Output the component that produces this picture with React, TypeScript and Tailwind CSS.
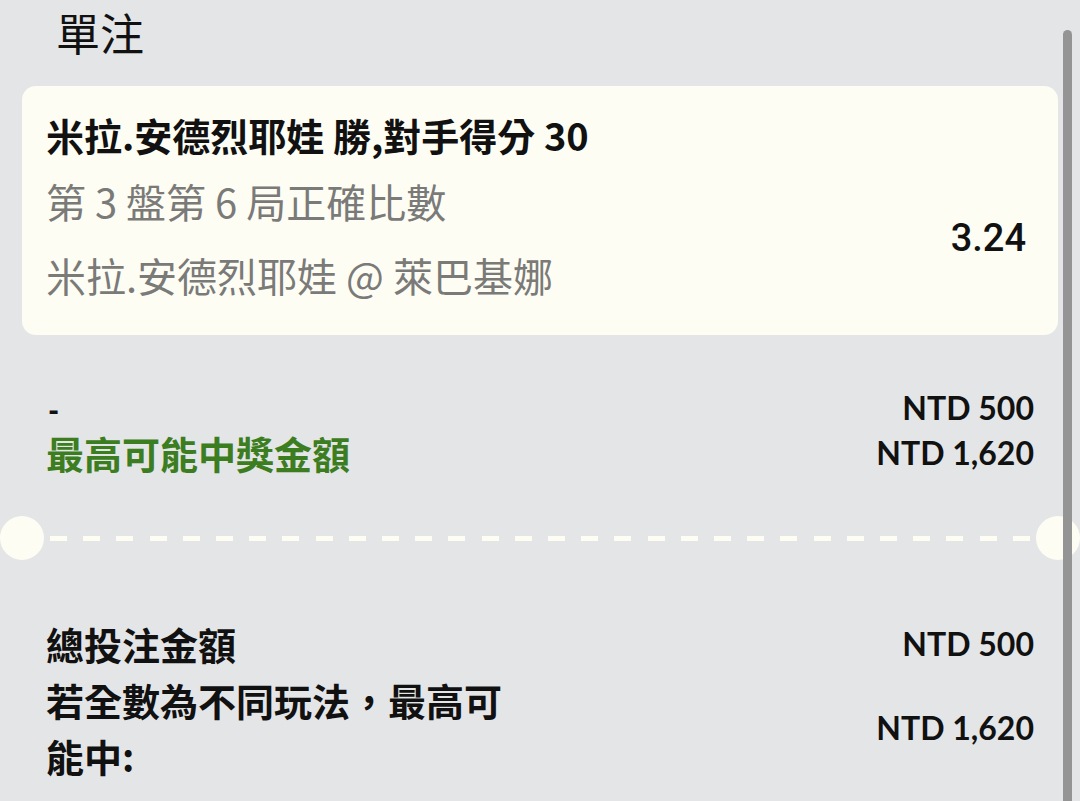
const cjk = "font-['Noto_Sans_CJK_TC','Noto_Sans',sans-serif]";
const num = "font-['Lato','Noto_Sans_CJK_TC',sans-serif]";

function Divider() {
  return (
    <div className="flex h-[44px] items-center">
      <div className="h-[44px] w-[44px] shrink-0 rounded-full bg-[#fefdf3]" />
      <div className="ml-[6px] mr-[6px] flex flex-1 items-center justify-between">
        {Array.from({ length: 30 }).map((_, i) => (
          <span key={i} className="h-[5px] w-[17px] bg-[#fefdf3]" />
        ))}
      </div>
      <div className="h-[44px] w-[44px] shrink-0 rounded-full bg-[#fefdf3]" />
    </div>
  );
}

export default function App() {
  return (
    <div className={`relative h-[801px] w-[1080px] overflow-hidden bg-[#e4e5e7] ${cjk}`}>
      <h1 className="pl-[56px] text-[44px] font-normal leading-[64px] text-[#111]">單注</h1>

      <div className="mx-[22px] mt-[22px] rounded-[14px] bg-[#fefdf4] pb-[26px] pl-[24px] pr-[32px] pt-[17px]">
        <div className="text-[38px] font-bold leading-[64px] text-[#111]">
          米拉.安德烈耶娃 勝,對手得分 30
        </div>
        <div className="flex items-center justify-between">
          <div className="text-[40px] text-[#7a7a78]">
            <div className="leading-[68px]">第 3 盤第 6 局正確比數</div>
            <div className="mt-[6px] leading-[68px]">米拉.安德烈耶娃 @ 萊巴基娜</div>
          </div>
          <div className="font-['Roboto',sans-serif] text-[38px] font-medium text-[#111]">3.24</div>
        </div>
      </div>

      <div className="mt-[50px] px-[46px]">
        <div className="flex h-[45px] items-center justify-between">
          <span className={`${num} pl-[2px] pt-[4px] text-[30px] font-black leading-[30px] text-[#111]`}>-</span>
          <span className={`${num} text-[32px] font-bold leading-[45px] text-[#111]`}>NTD 500</span>
        </div>
        <div className="flex h-[45px] items-center justify-between">
          <span className="text-[38px] font-bold leading-[45px] text-[#3c7d1f]">最高可能中獎金額</span>
          <span className={`${num} text-[32px] font-bold leading-[45px] text-[#111]`}>NTD 1,620</span>
        </div>
      </div>

      <div className="mt-[41px]">
        <Divider />
      </div>

      <div className="mt-[56px] px-[46px] text-[#111]">
        <div className="flex items-center justify-between leading-[56px]">
          <span className="text-[38px] font-bold">總投注金額</span>
          <span className={`${num} text-[32px] font-bold`}>NTD 500</span>
        </div>
        <div className="flex items-center justify-between leading-[56px]">
          <span className="w-[480px] text-[38px] font-bold">若全數為不同玩法，最高可能中:</span>
          <span className={`${num} text-[32px] font-bold`}>NTD 1,620</span>
        </div>
      </div>

      <div className="absolute bottom-0 right-[8px] top-[30px] w-[9px] rounded-t-full bg-[#949494]" />
    </div>
  );
}
